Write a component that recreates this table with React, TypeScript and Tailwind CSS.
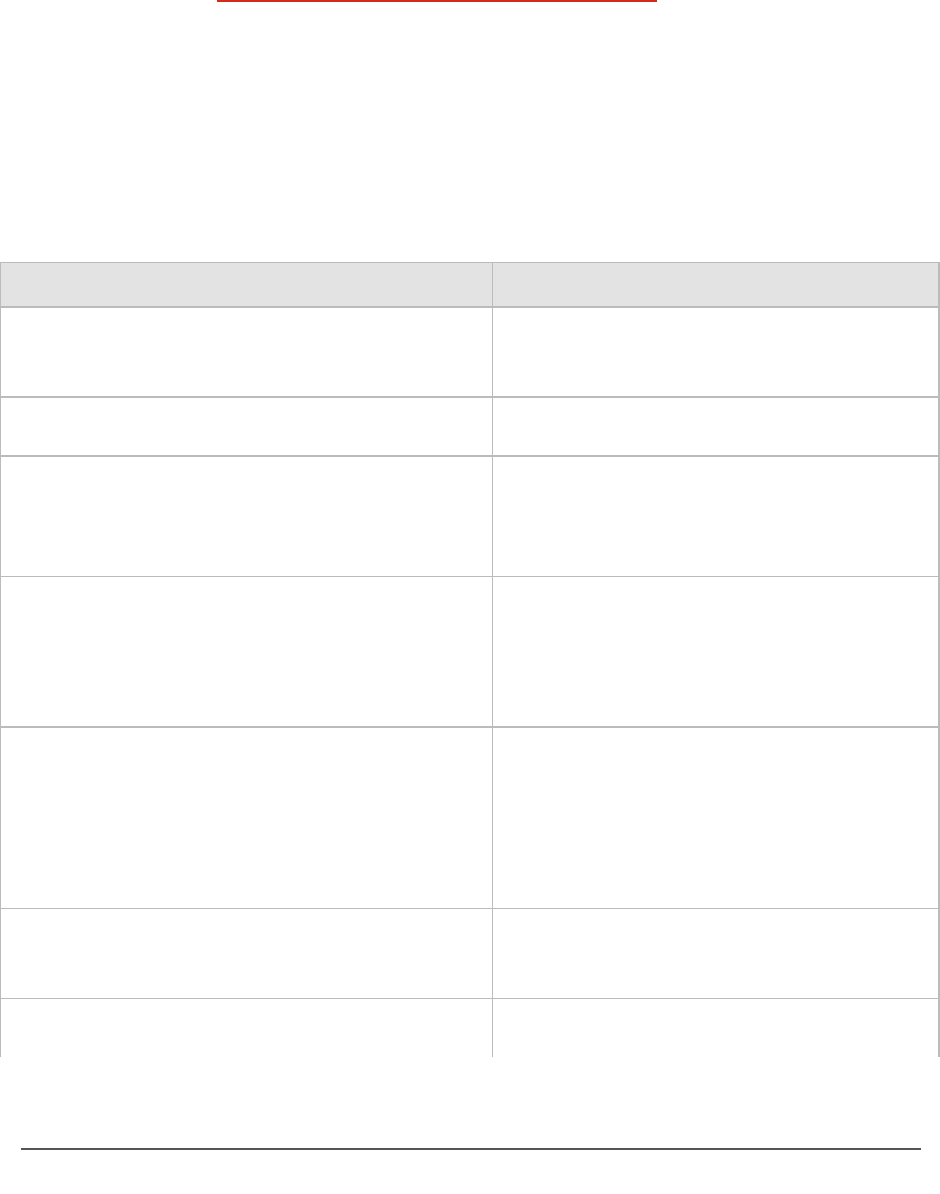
const rows = [
  { h: 'h-[90px]', b: 'border-b-2' },
  { h: 'h-[59px]', b: 'border-b-2' },
  { h: 'h-[120px]', b: 'border-b' },
  { h: 'h-[151px]', b: 'border-b-2' },
  { h: 'h-[181px]', b: 'border-b' },
  { h: 'h-[90px]', b: 'border-b' },
  { h: 'h-[58px]', b: '' },
];

export default function App() {
  return (
    <div className="w-[940px] min-h-[1194px] bg-white font-['Liberation_Sans',sans-serif]">
      {/* red rule at the top */}
      <div className="ml-[217px] w-[440px] h-[2px] bg-[#d02b1b]" />

      {/* table */}
      <div className="mt-[260px] w-[940px] border-t border-l border-r-2 border-[#bbbbbb]">
        <div className="flex h-[45px] bg-[#e3e3e3] border-b-2 border-[#bbbbbb]">
          <div className="w-[492px] border-r border-[#bbbbbb]" />
          <div className="flex-1" />
        </div>
        {rows.map((r, i) => (
          <div key={i} className={`flex ${r.h} ${r.b} border-[#bbbbbb]`}>
            <div className="w-[492px] border-r border-[#bbbbbb]" />
            <div className="flex-1" />
          </div>
        ))}
      </div>

      {/* footer rule */}
      <div className="mt-[91px] ml-[21px] w-[900px] h-[2px] bg-[#555555]" />
    </div>
  );
}
